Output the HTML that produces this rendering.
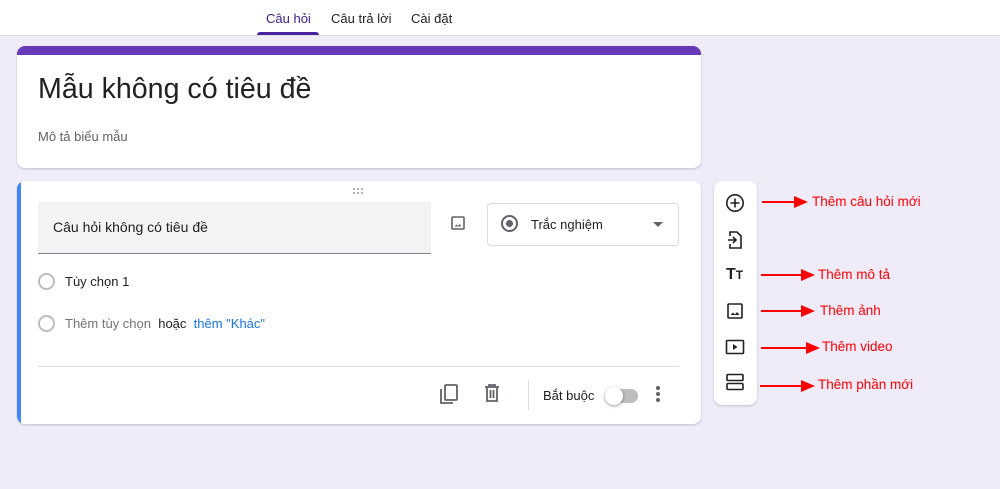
<!DOCTYPE html>
<html><head><meta charset="utf-8"><style>
*{margin:0;padding:0;box-sizing:border-box}
body{width:1000px;height:489px;background:#f0ebf8;font-family:"Liberation Sans",sans-serif;position:relative;overflow:hidden;color:#202124}
.a{position:absolute}
.hdr{left:0;top:0;width:1000px;height:36px;background:#fff;border-bottom:1px solid #dadce0}
.tab{top:11px;font-size:13px}
.card{background:#fff;border-radius:8px;box-shadow:0 1px 2px rgba(0,0,0,.2)}
.red{color:#f00;font-size:13.5px}
.arr{height:2px;background:#f00}
.arr::after{content:"";position:absolute;right:-2px;top:-5px;border-left:14px solid #f00;border-top:6px solid transparent;border-bottom:6px solid transparent}
.radio{width:17px;height:17px;border:2px solid #bdbdbd;border-radius:50%}
.d{position:absolute;width:2px;height:2px;background:#9aa0a6;border-radius:50%}
</style></head><body>
<div class="a hdr"></div>
<div class="a tab" style="left:266px;color:#3f1d8f">Câu hỏi</div>
<div class="a" style="left:257px;top:32px;width:62px;height:3px;background:#4a24a0;border-radius:3px 3px 0 0"></div>
<div class="a tab" style="left:331px">Câu trả lời</div>
<div class="a tab" style="left:411px">Cài đặt</div>

<div class="a card" style="left:17px;top:46px;width:684px;height:122px;overflow:hidden">
<div style="height:9px;background:#673ab7"></div>
<div class="a" style="left:21px;top:27px;font-size:28.6px">Mẫu không có tiêu đề</div>
<div class="a" style="left:21px;top:83px;font-size:13px;color:#5f6368">Mô tả biểu mẫu</div>
</div>

<div class="a card" style="left:17px;top:181px;width:684px;height:243px;overflow:hidden">
<div class="a" style="left:0;top:0;width:4px;height:243px;background:#4285f4"></div>
<div class="d" style="left:336px;top:7px"></div><div class="d" style="left:340px;top:7px"></div><div class="d" style="left:344px;top:7px"></div>
<div class="d" style="left:336px;top:11px"></div><div class="d" style="left:340px;top:11px"></div><div class="d" style="left:344px;top:11px"></div>
<div class="a" style="left:21px;top:21px;width:393px;height:52px;background:#f1f3f4;border-bottom:1px solid #80868b"></div>
<div class="a" style="left:36px;top:38px;font-size:14px">Câu hỏi không có tiêu đề</div>
<svg class="a" style="left:433px;top:34px" width="16" height="16" viewBox="0 0 16 16"><rect x="2" y="2" width="12" height="12" rx="1" fill="none" stroke="#5f6368" stroke-width="1.6"/><path d="M4.5 11.5l2-2 1.5 1.5 1.5-2 2 2.5z" fill="#5f6368"/></svg>
<div class="a" style="left:470px;top:22px;width:192px;height:43px;border:1px solid #dadce0;border-radius:4px"></div>
<div class="a" style="left:484px;top:34px;width:17px;height:17px;border:2px solid #5f6368;border-radius:50%"><div style="margin:3px;width:7px;height:7px;border-radius:50%;background:#5f6368"></div></div>
<div class="a" style="left:514px;top:36px;font-size:13px">Trắc nghiệm</div>
<div class="a" style="left:636px;top:41px;border-top:5px solid #5f6368;border-left:5px solid transparent;border-right:5px solid transparent"></div>
<div class="a radio" style="left:21px;top:92px"></div>
<div class="a" style="left:48px;top:93px;font-size:13px">Tùy chọn 1</div>
<div class="a radio" style="left:21px;top:134px"></div>
<div class="a" style="left:48px;top:135px;font-size:13px;color:#70757a">Thêm tùy chọn <span style="color:#202124">&nbsp;hoặc&nbsp;</span> <span style="color:#1a73e8">thêm "Khác"</span></div>
<div class="a" style="left:21px;top:185px;width:641px;height:1px;background:#dadce0"></div>
<svg class="a" style="left:421px;top:202px" width="22" height="22" viewBox="0 0 22 22" fill="none" stroke="#5f6368" stroke-width="1.8"><rect x="7" y="2" width="12" height="15" rx="1"/><path d="M3 6v14h12"/></svg>
<svg class="a" style="left:465px;top:202px" width="20" height="20" viewBox="0 0 20 20" fill="none" stroke="#5f6368" stroke-width="1.8"><path d="M3 4h14M7 4V2h6v2M5 4v14h10V4M8.5 7v8M11.5 7v8"/></svg>
<div class="a" style="left:511px;top:199px;width:1px;height:30px;background:#dadce0"></div>
<div class="a" style="left:526px;top:207px;font-size:13px">Bắt buộc</div>
<div class="a" style="left:590px;top:208px;width:31px;height:14px;border-radius:7px;background:#bdbdbd"></div>
<div class="a" style="left:588px;top:206px;width:18px;height:18px;border-radius:50%;background:#fff;box-shadow:0 1px 3px rgba(0,0,0,.4)"></div>
<div class="a" style="left:639px;top:205px;width:4px;line-height:0">
<div style="width:4px;height:4px;border-radius:50%;background:#5f6368;margin-bottom:2px"></div><div style="width:4px;height:4px;border-radius:50%;background:#5f6368;margin-bottom:2px"></div><div style="width:4px;height:4px;border-radius:50%;background:#5f6368"></div></div>
</div>

<div class="a card" style="left:714px;top:181px;width:43px;height:224px"></div>
<svg class="a" style="left:725px;top:193px" width="20" height="20" viewBox="0 0 20 20" fill="none" stroke="#202124" stroke-width="1.6"><circle cx="10" cy="10" r="8.2"/><path d="M10 5.5v9M5.5 10h9"/></svg>
<svg class="a" style="left:726px;top:230px" width="18" height="20" viewBox="0 0 18 20" fill="none" stroke="#202124" stroke-width="1.6"><path d="M4 6V2h7l4 4v12H4v-4"/><path d="M2 10h8M7 7l3 3-3 3"/></svg>
<div class="a" style="left:726px;top:266px;font-weight:bold;font-size:16px">T<span style="font-size:12px">T</span></div>
<svg class="a" style="left:726px;top:302px" width="18" height="18" viewBox="0 0 18 18"><rect x="2" y="2" width="14" height="14" rx="1" fill="none" stroke="#202124" stroke-width="1.6"/><path d="M4.5 13l2.5-2.5 2 2 2-2.5 2.5 3z" fill="#202124"/></svg>
<svg class="a" style="left:725px;top:339px" width="20" height="16" viewBox="0 0 20 16"><rect x="1.5" y="1.5" width="17" height="13" rx="1" fill="none" stroke="#202124" stroke-width="1.6"/><path d="M8 5v6l4.5-3z" fill="#202124"/></svg>
<svg class="a" style="left:725px;top:373px" width="20" height="18" viewBox="0 0 20 18" fill="none" stroke="#202124" stroke-width="1.6"><rect x="2" y="1.5" width="16" height="6" rx="1"/><rect x="2" y="10.5" width="16" height="6" rx="1"/></svg>

<div class="a arr" style="left:762px;top:201px;width:44px"></div>
<div class="a red" style="left:812px;top:194px">Thêm câu hỏi mới</div>
<div class="a arr" style="left:761px;top:274px;width:52px"></div>
<div class="a red" style="left:818px;top:267px">Thêm mô tả</div>
<div class="a arr" style="left:761px;top:310px;width:52px"></div>
<div class="a red" style="left:820px;top:303px">Thêm ảnh</div>
<div class="a arr" style="left:761px;top:347px;width:57px"></div>
<div class="a red" style="left:822px;top:339px">Thêm video</div>
<div class="a arr" style="left:760px;top:385px;width:53px"></div>
<div class="a red" style="left:818px;top:377px">Thêm phần mới</div>
</body></html>
